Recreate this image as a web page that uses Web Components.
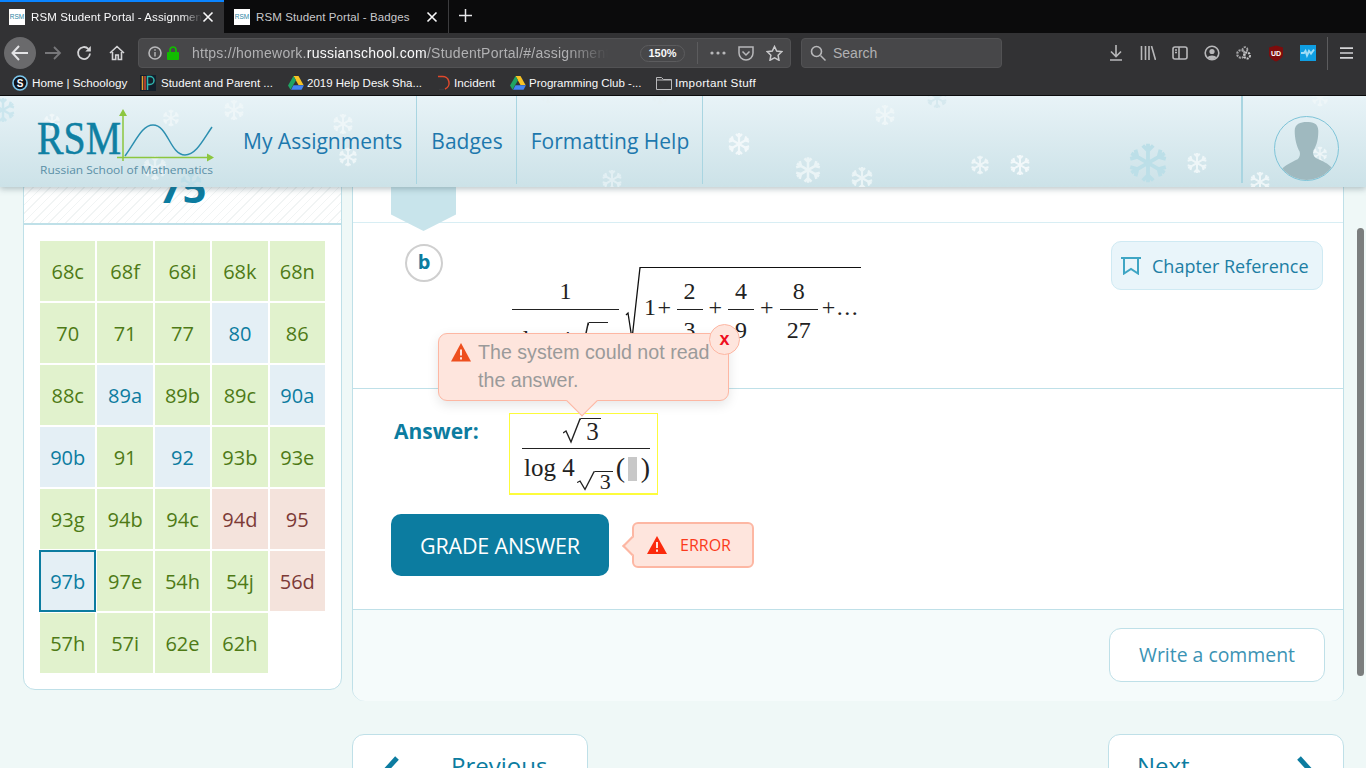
<!DOCTYPE html>
<html>
<head>
<meta charset="utf-8">
<title>RSM Student Portal</title>
<style>
  html, body { height: 100%; margin: 0; overflow: hidden; }
  body { background: #eff8f7; font-family: "Open Sans", sans-serif; }
</style>
</head>
<body>
<browser-chrome></browser-chrome>
<portal-view>
  <problem-list>
    <problem-cell>68c</problem-cell><problem-cell>68f</problem-cell><problem-cell>68i</problem-cell><problem-cell>68k</problem-cell><problem-cell>68n</problem-cell>
    <problem-cell>70</problem-cell><problem-cell>71</problem-cell><problem-cell>77</problem-cell><problem-cell state="open">80</problem-cell><problem-cell>86</problem-cell>
    <problem-cell>88c</problem-cell><problem-cell state="open">89a</problem-cell><problem-cell>89b</problem-cell><problem-cell>89c</problem-cell><problem-cell state="open">90a</problem-cell>
    <problem-cell state="open">90b</problem-cell><problem-cell>91</problem-cell><problem-cell state="open">92</problem-cell><problem-cell>93b</problem-cell><problem-cell>93e</problem-cell>
    <problem-cell>93g</problem-cell><problem-cell>94b</problem-cell><problem-cell>94c</problem-cell><problem-cell state="wrong">94d</problem-cell><problem-cell state="wrong">95</problem-cell>
    <problem-cell state="current">97b</problem-cell><problem-cell>97e</problem-cell><problem-cell>54h</problem-cell><problem-cell>54j</problem-cell><problem-cell state="wrong">56d</problem-cell>
    <problem-cell>57h</problem-cell><problem-cell>57i</problem-cell><problem-cell>62e</problem-cell><problem-cell>62h</problem-cell>
  </problem-list>
  <problem-card></problem-card>
</portal-view>

<script>
// Shadow root is filled on connect so attributes are there
class Piece extends HTMLElement {
  connectedCallback() {
    if( this.shadowRoot ) return;

    const template = document.createElement( 'template' );
    template.innerHTML = `<style>${this.styles()}</style>${this.markup()}`;

    this.attachShadow( {mode: 'open'} );
    this.shadowRoot.appendChild( template.content.cloneNode( true ) );
  }

  styles() { return ''; }
  markup() { return '<slot></slot>'; }
}

const STROKE = 'fill="none" stroke="#b8b8ba" stroke-width="1.6"';

const DRIVE = `
  <svg width="16" height="14" viewBox="0 0 16 14">
    <path d="M5.5 0h5l5 9h-5z" fill="#f7c325"/>
    <path d="M5.5 0L0 9.500l2.500 4.200L8 4.300z" fill="#1fa463"/>
    <path d="M5.500 9.300H16l-2.500 4.400H3z" fill="#4285f4"/>
  </svg>`;

class BrowserChrome extends Piece {
  styles() {
    return /* css */ `
      :host { display: block; height: 96px; background: #323234; color: #f9f9fa; font-family: "Liberation Sans", sans-serif; font-size: 11.5px; }
      svg { display: block; flex: none; }
      .tabs { display: flex; height: 33px; background: #0b0b0c; align-items: stretch; }
      .tab { box-sizing: border-box; width: 225px; display: flex; align-items: center; padding: 0 10px 0 9px; }
      .tab.on { background: #323234; border-top: 2px solid #0a84ff; width: 224px; padding-bottom: 2px; }
      .tab.off { border-right: 1px solid #3c3c3e; color: #c9c9cb; padding-left: 10px; }
      .fav { width: 16px; height: 16px; background: #fff; color: #2a86a4; font: 6.5px/16px "Liberation Sans", sans-serif; text-align: center; flex: none; overflow: hidden; }
      .title { flex: 1; margin-left: 6px; white-space: nowrap; overflow: hidden; letter-spacing: .1px; }
      .on .title { -webkit-mask-image: linear-gradient( 90deg, #000 88%, transparent ); }
      .plus { margin: 8px 0 0 9px; }
      .tools { display: flex; align-items: center; height: 37px; box-sizing: border-box; padding-top: 3px; }
      .back { width: 32px; height: 32px; border-radius: 50%; background: #6a6a6c; margin-left: 4px; display: flex; align-items: center; justify-content: center; flex: none; }
      .nav { flex: none; margin-left: 9px; }
      .url { box-sizing: border-box; width: 653px; height: 30px; margin-left: 13px; border: 1px solid #525254; border-radius: 4px; background: #474749; display: flex; align-items: center; padding-left: 9px; flex: none; }
      .address { width: 416px; margin-left: 13px; font-size: 14px; color: #b1b1b3; white-space: nowrap; overflow: hidden; -webkit-mask-image: linear-gradient( 90deg, #000 90%, transparent ); letter-spacing: .25px; }
      .address b { color: #f9f9fa; font-weight: 400; }
      .zoom { box-sizing: border-box; width: 45px; height: 17px; margin-left: 32px; border: 1px solid #5c5c5e; border-radius: 9px; font-size: 11px; font-weight: 700; line-height: 15px; text-align: center; flex: none; }
      .sep { width: 1px; height: 22px; background: #5c5c5e; margin-left: 12px; flex: none; }
      .search { box-sizing: border-box; width: 201px; height: 30px; margin-left: 10px; border: 1px solid #525254; border-radius: 4px; background: #474749; display: flex; align-items: center; padding-left: 8px; font-size: 14px; color: #b1b1b3; gap: 7px; flex: none; }
      .right { display: flex; align-items: center; margin-left: 106px; gap: 16px; }
      .bar { width: 1px; height: 33px; background: #5c5c5e; margin-left: 11px; }
      .marks { display: flex; align-items: center; height: 25px; border-bottom: 1px solid #0b0b0c; font-size: 11.5px; white-space: nowrap; }
      .marks span { margin-left: 3px; }
    `;
  }

  markup() {
    return /* html */ `
      <div class="tabs">
        <div class="tab on">
          <div class="fav">RSM</div><div class="title">RSM Student Portal - Assignments</div>
          <svg width="12" height="12" viewBox="0 0 12 12"><path d="M1.500 1.500l9 9M10.500 1.500l-9 9" stroke="#f9f9fa" stroke-width="1.600"/></svg>
        </div>
        <div class="tab off">
          <div class="fav">RSM</div><div class="title">RSM Student Portal - Badges</div>
          <svg width="12" height="12" viewBox="0 0 12 12"><path d="M1.500 1.500l9 9M10.500 1.500l-9 9" stroke="#f9f9fa" stroke-width="1.600"/></svg>
        </div>
        <svg class="plus" width="15" height="15" viewBox="0 0 15 15"><path d="M7.500 1v13M1 7.500h13" stroke="#e8e8ea" stroke-width="1.500"/></svg>
      </div>
      <div class="tools">
        <div class="back"><svg width="18" height="16" viewBox="0 0 18 16"><path d="M8 1L1.500 8 8 15M2 8h15" fill="none" stroke="#e4e4e6" stroke-width="2"/></svg></div>
        <svg class="nav" style="margin-left:8px" width="18" height="16" viewBox="0 0 18 16"><path d="M10 2l6 6-6 6M16 8H1" fill="none" stroke="#77777a" stroke-width="1.800"/></svg>
        <svg class="nav" style="margin-left:14px" width="16" height="16" viewBox="0 0 16 16"><path d="M14 8.500A6 6 0 1 1 12.300 3.800" fill="none" stroke="#d4d4d6" stroke-width="1.800"/><path d="M14.800 1v5.500H9.300z" fill="#d4d4d6"/></svg>
        <svg class="nav" style="margin-left:17px" width="16" height="16" viewBox="0 0 16 16"><path d="M1 8l7-6.500L15 8M3.500 7v7.500h3.200v-4.500h2.600v4.500h3.200V7" fill="none" stroke="#d4d4d6" stroke-width="1.600"/></svg>
        <div class="url">
          <svg width="14" height="14" viewBox="0 0 14 14"><circle cx="7" cy="7" r="6" ${STROKE} stroke-width="1.200"/><path d="M7 6v4.500M7 3.200v1.600" stroke="#b8b8ba" stroke-width="1.400"/></svg>
          <svg style="margin-left:5px" width="12" height="14" viewBox="0 0 12 14"><rect y="6" width="12" height="8" rx="1" fill="#12bc00"/><path d="M3 6.500V4a3 3 0 0 1 6 0v2.500" fill="none" stroke="#12bc00" stroke-width="1.700"/></svg>
          <div class="address">https://homework.<b>russianschool.com</b>/StudentPortal/#/assignments</div>
          <div class="zoom">150%</div>
          <div class="sep"></div>
          <svg style="margin-left:12px;flex:none" width="16" height="4" viewBox="0 0 16 4"><circle cx="2" cy="2" r="1.600" fill="#b8b8ba"/><circle cx="8" cy="2" r="1.600" fill="#b8b8ba"/><circle cx="14" cy="2" r="1.600" fill="#b8b8ba"/></svg>
          <svg style="margin-left:12px;flex:none" width="16" height="15" viewBox="0 0 16 15"><path d="M1 1h14v6a7 7 0 0 1-14 0zM4.500 5.500L8 9l3.500-3.500" fill="none" stroke="#b8b8ba" stroke-width="1.500"/></svg>
          <svg style="margin-left:12px;flex:none" width="17" height="16" viewBox="0 0 17 16"><path d="M8.500 1.500l2.200 4.500 5 .7-3.600 3.500.9 5-4.500-2.400L4 15.200l.9-5L1.300 6.700l5-.7z" fill="none" stroke="#c8c8ca" stroke-width="1.500"/></svg>
        </div>
        <div class="search">
          <svg width="16" height="16" viewBox="0 0 16 16"><circle cx="6.500" cy="6.500" r="5" ${STROKE} stroke-width="1.400"/><path d="M10.500 10.500l5 5" stroke="#b8b8ba" stroke-width="1.500"/></svg>
          Search
        </div>
        <div class="right">
          <svg width="16" height="16" viewBox="0 0 16 16"><path d="M8 0v11M3 6.500l5 5 5-5M2 15h12" ${STROKE}/></svg>
          <svg width="16" height="14" viewBox="0 0 16 14"><path d="M1.500 0v14M5.500 0v14M9 0v14M11.500 0l4 14" ${STROKE} stroke-width="1.700"/></svg>
          <svg width="16" height="14" viewBox="0 0 16 14"><rect x="1" y="1" width="14" height="12" rx="2" ${STROKE}/><path d="M7 1v12" ${STROKE}/><path d="M3 4h2M3 6.500h2" ${STROKE} stroke-width="1.100"/></svg>
          <svg width="16" height="16" viewBox="0 0 16 16"><circle cx="8" cy="8" r="6.800" ${STROKE}/><circle cx="8" cy="6.500" r="2.600" fill="#b8b8ba"/><path d="M3.500 12.500c1-2.800 8-2.800 9 0L8 15z" fill="#b8b8ba"/></svg>
          <svg width="16" height="14" viewBox="0 0 16 14"><circle cx="5" cy="8" r="3.800" fill="none" stroke="#a5a5a7" stroke-width="2.200" stroke-dasharray="2 1"/><circle cx="11" cy="9.500" r="3" fill="none" stroke="#c8c8ca" stroke-width="2" stroke-dasharray="2 1"/><circle cx="9" cy="3.500" r="2.400" fill="none" stroke="#a5a5a7" stroke-width="1.800" stroke-dasharray="2 1"/></svg>
          <svg width="16" height="17" viewBox="0 0 16 17"><path d="M8 .5l7 2v7c0 3-3.500 5.500-7 7-3.500-1.500-7-4-7-7v-7z" fill="#7d0c0c"/><text x="8" y="10.500" font-size="7" font-weight="700" text-anchor="middle" fill="#fff" font-family="Liberation Sans">UD</text></svg>
          <svg width="16" height="16" viewBox="0 0 16 16"><rect width="16" height="16" fill="#0f9ee2"/><path d="M1 8h3l1.500-2L7 10.500 9 6l2 2.500 3-4" fill="none" stroke="#9edcf7" stroke-width="2"/></svg>
        </div>
        <div class="bar"></div>
        <svg style="margin-left:12px;flex:none" width="13" height="12" viewBox="0 0 13 12"><path d="M0 1.200h13M0 6h13M0 10.800h13" stroke="#d4d4d6" stroke-width="1.700"/></svg>
      </div>
      <div class="marks">
        <svg style="margin-left:12px" width="16" height="16" viewBox="0 0 16 16"><circle cx="8" cy="8" r="7" fill="#10131a" stroke="#7cc8ee" stroke-width="1.600"/><text x="8" y="11.500" font-size="10" font-weight="700" text-anchor="middle" fill="#fff" font-family="Liberation Sans">S</text></svg>
        <span style="margin-left:4px;width:96px;font-size:11.7px">Home | Schoology</span>
        <svg style="margin-left:12px" width="16" height="16" viewBox="0 0 16 16"><rect width="16" height="16" fill="#14202c"/><path d="M2.500 1v14" stroke="#e8a02c" stroke-width="1.500"/><path d="M5 1v14" stroke="#d84a32" stroke-width="1.500"/><path d="M7.500 15V1.500h2.500a4 4 0 0 1 0 8H7.500" fill="none" stroke="#2fb5ae" stroke-width="1.500"/></svg>
        <span style="margin-left:5px;width:112px">Student and Parent ...</span>
        <div style="margin-left:15px">${DRIVE}</div>
        <span style="width:114px">2019 Help Desk Sha...</span>
        <svg style="margin-left:16px" width="14" height="16" viewBox="0 0 14 16"><path d="M1 1.500h4a6.500 6.500 0 0 1 3 12.500" fill="none" stroke="#e0492c" stroke-width="1.500"/><path d="M2 14.500h5" stroke="#3b3b3d" stroke-width="1.500"/></svg>
        <span style="width:43px;font-size:11.7px">Incident</span>
        <div style="margin-left:13px">${DRIVE}</div>
        <span style="margin-left:3px;width:114px">Programming Club -...</span>
        <svg style="margin-left:13px" width="16" height="14" viewBox="0 0 16 14"><path d="M.5 13.500v-12h5l2 2h8v10z M.5 4h15" fill="none" stroke="#b8b8ba"/></svg>
        <span style="font-size:11.7px;letter-spacing:.3px">Important Stuff</span>
      </div>
    `;
  }
}

// x, y are the flake centres in header coordinates
const FLAKES = [
  [3, 14, 26, '#cbe6ee'], [52, 26, 18, '#f0f7f9'], [171, 22, 18, '#eef6f8'], [234, 14, 22, '#eef6f8'],
  [343, 28, 22, '#eef6f8'], [348, 61, 20, '#eef6f8'], [155, 72, 26, '#e6f1f4'], [191, 88, 24, '#bfdfe8'],
  [612, 84, 22, '#e2eff3'], [739, 48, 24, '#f2f8fa'], [808, 74, 28, '#eaf4f6'], [862, 82, 24, '#eaf4f6'],
  [885, 19, 22, '#eef6f8'], [937, 2, 22, '#d6e9ef'], [980, 69, 20, '#eef6f8'], [1020, 69, 22, '#f2f8fa'],
  [1148, 67, 42, '#bcdfe8'], [1197, 67, 22, '#eef6f8'], [1260, 86, 22, '#eef6f8'], [1320, 2, 18, '#eef6f8'],
  [1320, 58, 16, '#eef6f8'], [660, 0, 18, '#e6f1f4'], [548, 0, 16, '#e6f1f4']
];

class RsmHeader extends Piece {
  styles() {
    return /* css */ `
      :host { display: flex; position: relative; z-index: 3; height: 91px; background: linear-gradient( #e8f3f7, #cce2e8 ); box-shadow: 0 2px 6px rgba( 60, 90, 100, .35 ); overflow: visible; }
      .flakes { position: absolute; inset: 0; overflow: hidden; }
      .flake { position: absolute; }
      .logo { position: relative; width: 229px; flex: none; overflow: visible; }
      nav { position: relative; display: flex; height: 88px; }
      a { display: flex; align-items: center; box-sizing: border-box; height: 88px; padding: 2px 13px 0 14px; border-right: 1px solid #a9d5e1; font-size: 21px; color: #1d78ad; white-space: nowrap; }
      a:first-child { padding-right: 14px; }
      .me { position: relative; margin-left: auto; width: 125px; height: 87px; box-sizing: border-box; border-left: 2px solid #a9d5e1; padding: 20px 0 0 31px; }
      .avatar { box-sizing: border-box; display: block; width: 65px; height: 65px; border: 1px solid #7ec4d8; border-radius: 50%; overflow: hidden; }
    `;
  }

  flake( [x, y, size, color] ) {
    const arms = [0, 60, 120].map( a => `<path transform="rotate(${a} 12 12)" d="M12 1v22M12 5l-3-3M12 5l3-3M12 19l-3 3M12 19l3 3" />` ).join( '' );
    return `<svg class="flake" style="left:${x - size / 2}px;top:${y - size / 2}px" width="${size}" height="${size}" viewBox="0 0 24 24" fill="none" stroke="${color}" stroke-width="2.200">${arms}</svg>`;
  }

  markup() {
    return /* html */ `
      <div class="flakes">${FLAKES.map( f => this.flake( f ) ).join( '' )}</div>
      <svg class="logo" width="229" height="91" viewBox="0 0 229 91">
        <text x="37" y="58" font-family="Liberation Serif" font-size="46" fill="#0f80a3" stroke="#0f80a3" stroke-width=".5" textLength="84" lengthAdjust="spacingAndGlyphs">RSM</text>
        <path d="M123 15v50M117 61.500h95" fill="none" stroke="#8cc63f" stroke-width="1.500"/>
        <path d="M123 13l-4 7h8zM214 61.500l-7-4v8z" fill="#8cc63f"/>
        <path d="M125 60C136 45 142 29 153 29c15 0 17 30 32 30 11 0 18-15 27-28" fill="none" stroke="#2c8fb0" stroke-width="1.500"/>
        <text x="40" y="77.500" font-family="Open Sans" font-size="11" fill="#5a8fa6" textLength="173" lengthAdjust="spacingAndGlyphs">Russian School of Mathematics</text>
      </svg>
      <nav><a>My Assignments</a><a>Badges</a><a>Formatting Help</a></nav>
      <div class="me">
        <svg class="avatar" viewBox="0 0 64 64">
          <path d="M20 14c0-7 6-9 12-9s12 1 12 9c0 7-1 14-5 20-1 3 0 6 3 8 6 3 12 5 16 10L50 64H14L6 54c4-5 11-8 17-11 2-2 3-5 2-8-3-5-5-13-5-21z" fill="#9fb9bf"/>
        </svg>
      </div>
    `;
  }
}

class PortalView extends Piece {
  styles() {
    return /* css */ `
      :host { display: block; position: relative; height: 672px; overflow: hidden; }
      .body { display: flex; align-items: flex-start; gap: 10px; padding-left: 23px; }
      .scroll { position: absolute; left: 1357px; top: 132px; width: 7px; height: 448px; border-radius: 4px; background: #7b7e7e; z-index: 4; }
    `;
  }

  markup() {
    return /* html */ `
      <rsm-header></rsm-header>
      <div class="body"><slot></slot></div>
      <div class="scroll"></div>
    `;
  }
}

class ProblemList extends Piece {
  styles() {
    return /* css */ `
      :host { display: block; box-sizing: border-box; width: 319px; margin-top: -60px; background: #fff; border: 1px solid #bfe0e8; border-radius: 0 0 12px 12px; flex: none; }
      .score { height: 97px; border-bottom: 2px solid #bfe0e8; background: repeating-linear-gradient( 135deg, #f1f4f4 0 1px, #fff 1px 6px ); font-size: 42px; font-weight: 700; line-height: 1; color: #0c7ca0; text-align: center; box-sizing: border-box; padding-top: 38px; }
      .grid { display: grid; grid-template-columns: repeat( 5, 1fr ); grid-auto-rows: 60px; gap: 2px; padding: 16px; }
    `;
  }

  markup() {
    return /* html */ `<div class="score">75</div><div class="grid"><slot></slot></div>`;
  }
}

class ProblemCell extends Piece {
  styles() {
    return /* css */ `
      :host { display: flex; align-items: center; justify-content: center; box-sizing: border-box; font-size: 20px; background: #e1f2cd; color: #4e7a16; }
      :host( [state=open] ) { background: #e4eff5; color: #0c7ca0; }
      :host( [state=wrong] ) { background: #f4e3dc; color: #7c3a36; }
      :host( [state=current] ) { background: #e4eff5; color: #0c7ca0; outline: 2px solid #0c7ca0; outline-offset: -1px; position: relative; }
    `;
  }
}

class MFrac extends Piece {
  styles() {
    return /* css */ `
      :host { display: inline-flex; flex-direction: column; align-items: center; flex: none; line-height: 24px; }
      .num { padding: 0 7px 6px; }
      .bar { align-self: stretch; height: 1px; background: #222; }
      .den { padding: 8px 7px 0; white-space: nowrap; }
    `;
  }

  markup() {
    return /* html */ `<div class="num"><slot name="num"></slot></div><div class="bar"></div><div class="den"><slot name="den"></slot></div>`;
  }
}

class MSqrt extends Piece {
  styles() {
    return /* css */ `
      :host { display: inline-flex; align-items: stretch; vertical-align: top; }
      svg { display: block; flex: none; }
      .in { border-top: 1.500px solid #222; padding: 0 2px 0 5px; }
    `;
  }

  markup() {
    const w = this.getAttribute( 'w' ) || 18;
    const h = this.getAttribute( 'h' ) || 26;
    return /* html */ `
      <svg width="${w}" height="${h}" viewBox="0 0 18 26" preserveAspectRatio="none"><path d="M0 15l3-2 5 11L17 1h1" fill="none" stroke="#222" stroke-width="1.400"/></svg>
      <div class="in"><slot></slot></div>
    `;
  }
}

class AlertTip extends Piece {
  styles() {
    return /* css */ `
      :host { position: absolute; left: 85px; top: 110px; z-index: 2; box-sizing: border-box; width: 291px; height: 68px; padding: 4px 10px 0 12px; display: flex; gap: 7px; background: #fee5dd; border: 1px solid #fdb7a3; border-radius: 9px; box-shadow: 0 4px 12px rgba( 0, 0, 0, .1 ); font: 19.65px/28px "Liberation Sans", sans-serif; color: #9a9a9a; }
      svg { flex: none; margin-top: 5px; }
      .text { white-space: nowrap; }
      .tail { position: absolute; left: 132px; bottom: -12px; width: 22px; height: 22px; box-sizing: border-box; background: #fee5dd; border: solid #fdb7a3; border-width: 0 1px 1px 0; transform: rotate( 45deg ); }
      .close { position: absolute; left: 270px; top: -10px; box-sizing: border-box; width: 31px; height: 31px; background: #fee5dd; border: 1px solid #fdb7a3; border-radius: 50%; color: #ef0f1f; font-weight: 700; font-size: 18px; line-height: 29px; text-align: center; }
    `;
  }

  markup() {
    return /* html */ `
      <div class="tail"></div>
      <svg width="20" height="19" viewBox="0 0 20 19"><path d="M10 0L20 18.500H0z" fill="#ee4f1e"/><path d="M10 6.500v6M10 14.200v2.200" stroke="#fee5dd" stroke-width="2"/></svg>
      <div class="text">The system could not read<br>the answer.</div>
      <div class="close">x</div>
    `;
  }
}

class ProblemCard extends Piece {
  styles() {
    return /* css */ `
      :host { display: block; width: 992px; margin-top: -60px; flex: none; }
      .card { box-sizing: border-box; height: 574px; background: #fff; border: 1px solid #bfe0e8; border-radius: 0 0 12px 12px; }
      .top { box-sizing: border-box; height: 95px; border-bottom: 1px solid #d8eef4; padding-left: 38px; }
      .ribbon { position: relative; z-index: 1; width: 65px; height: 103px; background: #c8e4eb; clip-path: polygon( 0 0, 100% 0, 100% 84%, 50% 100%, 0 84% ); }
      .part { position: relative; box-sizing: border-box; height: 166px; border-bottom: 1px solid #bfe0e8; display: flex; align-items: flex-start; }
      .letter { box-sizing: border-box; width: 38px; height: 38px; margin: 21px 0 0 52px; border: 2px solid #cfcfcf; border-radius: 50%; font-size: 20px; font-weight: 700; line-height: 32px; text-align: center; color: #0c7ca0; flex: none; }
      .math { display: flex; align-items: flex-start; margin: 44px 0 0 69px; font: 24px/24px "Liberation Serif", serif; color: #222; flex: none; }
      .outer { width: 107px; margin-top: 12px; }
      .denom { display: flex; align-items: flex-start; }
      .denom m-sqrt { margin-top: 4px; }
      .denom b { display: block; padding-top: 12px; font-weight: 400; }
      .surd { margin-left: 5px; flex: none; }
      .root { box-sizing: border-box; width: 220px; border-top: 1px solid #111; padding: 11px 0 0 3px; display: flex; align-items: flex-start; flex: none; }
      .op { margin-top: 16px; white-space: pre; letter-spacing: 1.5px; }
      .root m-frac { margin-left: 4px; }
      .root .plus { margin-left: 6px; letter-spacing: 0; }
      .chapter { box-sizing: border-box; width: 212px; height: 49px; margin: 18px 20px 0 auto; background: #e9f5fa; border: 1px solid #cfeaf3; border-radius: 10px; display: flex; align-items: center; padding-left: 9px; gap: 11px; font-size: 18px; color: #1c7ea4; white-space: nowrap; flex: none; }
      .answer { box-sizing: border-box; height: 220px; padding: 24px 0 0 38px; }
      .line { display: flex; align-items: flex-start; }
      .label { width: 118px; padding: 3px 0 0 3px; box-sizing: border-box; font-size: 21px; font-weight: 700; line-height: 30px; color: #0c7ca0; flex: none; }
      .box { box-sizing: border-box; width: 149px; height: 82px; border: 1px solid #fdfc3c; border-bottom-width: 2px; padding: 0 7px 0 12px; font: 25px/26px "Liberation Serif", serif; color: #222; overflow: hidden; }
      .top-line { height: 35px; padding: 4px 8px 0 0; box-sizing: border-box; text-align: center; border-bottom: 1.500px solid #222; }
      .bottom-line { display: flex; align-items: flex-start; padding: 6px 0 0 2px; white-space: pre; }
      .sub { font-size: 22px; line-height: 20px; margin: 16px 0 0 2px; }
      .paren { font-size: 28px; margin-left: 3px; }
      .hole { width: 12px; height: 24px; background: #c8c8c8; margin: 2px 4px 0 3px; }
      .actions { display: flex; align-items: center; margin-top: 19px; }
      .grade { width: 218px; height: 62px; border-radius: 10px; background: #0c7ca0; color: #fff; font-size: 21.5px; line-height: 64px; text-align: center; letter-spacing: -.2px; flex: none; }
      .error { position: relative; box-sizing: border-box; width: 122px; height: 46px; margin-left: 23px; background: #fee5dd; border: 2px solid #fdb7a3; border-radius: 6px; display: flex; align-items: center; padding-left: 13px; gap: 13px; font-size: 16px; color: #fb3a1c; flex: none; }
      .error::before { content: ''; position: absolute; left: -9px; top: 15px; width: 12px; height: 12px; background: #fee5dd; border: solid #fdb7a3; border-width: 0 0 2px 2px; transform: rotate( 45deg ); }
      .foot { box-sizing: border-box; height: 92px; padding: 18px 18px 0 0; background: #f5fbfb; border-top: 1px solid #bfe0e8; border-radius: 0 0 12px 12px; }
      .comment { box-sizing: border-box; width: 216px; height: 54px; margin-left: auto; background: #fff; border: 1px solid #bfe0e8; border-radius: 12px; font-size: 19.400px; line-height: 52px; text-align: center; color: #3b93b4; }
      .pager { display: flex; justify-content: space-between; margin-top: 33px; }
      .page { box-sizing: border-box; width: 236px; height: 60px; display: flex; align-items: flex-start; background: #fff; border: 1px solid #bfe0e8; border-radius: 12px 12px 0 0; font-size: 24px; line-height: 30px; color: #0c7ca0; padding-top: 16px; }
      .page svg { margin-top: 5px; flex: none; }
    `;
  }

  markup() {
    return /* html */ `
      <div class="card">
        <div class="top"><div class="ribbon"></div></div>
        <div class="part">
          <div class="letter">b</div>
          <div class="math">
            <m-frac class="outer"><span slot="num">1</span><span slot="den" class="denom"><span style="margin-top:9px">log 4</span><m-sqrt h="48"><b>3</b></m-sqrt></span></m-frac>
            <svg class="surd" width="17" height="75" viewBox="0 0 17 75"><path d="M2 48l2-2 4 26L16 .500h1" fill="none" stroke="#111" stroke-width="1.300"/></svg>
            <div class="root">
              <span class="op">1+</span>
              <m-frac><span slot="num">2</span><span slot="den">3</span></m-frac>
              <span class="op plus">+</span>
              <m-frac style="margin-left:6px"><span slot="num">4</span><span slot="den">9</span></m-frac>
              <span class="op plus">+</span>
              <m-frac style="margin-left:6px"><span slot="num">8</span><span slot="den">27</span></m-frac>
              <span class="op" style="margin-left:4px">+...</span>
            </div>
          </div>
          <div class="chapter">
            <svg width="20" height="18" viewBox="0 0 20 18"><path d="M0 1h20M3 1v15.500l7-4.500 7 4.500V1" fill="none" stroke="#3fa6c4" stroke-width="2"/></svg>
            Chapter Reference
          </div>
          <alert-tip></alert-tip>
        </div>
        <div class="answer">
          <div class="line">
            <div class="label">Answer:</div>
            <div class="box">
              <div class="top-line"><m-sqrt>3</m-sqrt></div>
              <div class="bottom-line">log 4<span class="sub"><m-sqrt h="20" w="18">3</m-sqrt></span><span class="paren">(</span><span class="hole"></span><span class="paren" style="margin:0">)</span></div>
            </div>
          </div>
          <div class="actions">
            <div class="grade">GRADE ANSWER</div>
            <div class="error">
              <svg width="20" height="18" viewBox="0 0 20 18"><path d="M10 0l10 18H0z" fill="#fb2a0c"/><path d="M10 6v6M10 13.500v2.200" stroke="#fee5dd" stroke-width="2"/></svg>
              ERROR
            </div>
          </div>
        </div>
        <div class="foot"><div class="comment">Write a comment</div></div>
      </div>
      <div class="pager">
        <div class="page" style="padding-left:30px">
          <svg width="17" height="26" viewBox="0 0 17 26"><path d="M14 2L4 13l10 11" fill="none" stroke="#0c7ca0" stroke-width="5"/></svg>
          <span style="margin-left:51px">Previous</span>
        </div>
        <div class="page" style="padding-left:28px">
          <span style="width:159px">Next</span>
          <svg width="17" height="26" viewBox="0 0 17 26"><path d="M3 2l10 11L3 24" fill="none" stroke="#0c7ca0" stroke-width="5"/></svg>
        </div>
      </div>
    `;
  }
}

customElements.define( 'm-frac', MFrac );
customElements.define( 'm-sqrt', MSqrt );
customElements.define( 'alert-tip', AlertTip );
customElements.define( 'problem-cell', ProblemCell );
customElements.define( 'problem-list', ProblemList );
customElements.define( 'problem-card', ProblemCard );
customElements.define( 'rsm-header', RsmHeader );
customElements.define( 'portal-view', PortalView );
customElements.define( 'browser-chrome', BrowserChrome );
</script>
</body>
</html>
